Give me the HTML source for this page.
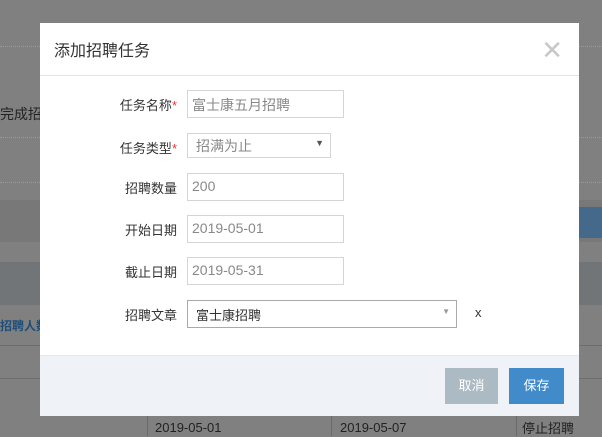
<!DOCTYPE html>
<html><head><meta charset="utf-8"><style>
*{margin:0;padding:0;box-sizing:border-box}
body{width:602px;height:433px;overflow:hidden;background:#808080;font-family:"Liberation Sans","Noto Sans CJK SC",sans-serif;position:relative}
.a{position:absolute}
.dl{position:absolute;left:0;width:602px;border-top:1px dotted #999}
.modal{position:absolute;left:40px;top:23px;width:539px;height:393px;background:#fff}
.hd{height:53px;border-bottom:1px solid #e5e5e5;font-size:16px;color:#333;padding:14px 0 0 14px}
.cl{position:absolute;right:16px;top:14px;font-size:26px;color:#c8c8c8;line-height:26px}
.lb{position:absolute;width:137px;text-align:right;font-size:13px;color:#333}
.lb i{color:#e33;font-style:normal}
.in{position:absolute;left:147px;width:157px;height:28px;border:1px solid #d5d5d5;font-size:14px;color:#888;padding:4px 0 0 4px}
.ft{position:absolute;left:0;top:332px;width:539px;height:61px;background:#eff3f8;border-top:1px solid #e4e9ee}
.bt{position:absolute;top:12px;height:36px;color:#fff;font-size:13px;text-align:center;line-height:36px}
</style></head><body>
<div class="dl" style="top:46px"></div>
<div class="dl" style="top:137px"></div>
<div class="dl" style="top:182px"></div>
<div class="a" style="left:0;top:200px;width:602px;height:42px;background:#787878"></div>
<div class="a" style="left:579px;top:207px;width:23px;height:31px;background:#45698a"></div>
<div class="a" style="left:0;top:262px;width:602px;height:43px;background:#727577"></div>
<div class="a" style="left:0;top:345px;width:602px;border-top:1px solid #6e6e6e"></div>
<div class="a" style="left:0;top:378px;width:602px;border-top:1px solid #6e6e6e"></div>
<div class="a" style="left:0;top:104px;font-size:14px;color:#222">完成招</div>
<div class="a" style="left:0;top:317px;font-size:12px;color:#1d4e7a;font-weight:bold">招聘人数</div>
<div class="a" style="left:147px;top:416px;height:20px;border-left:1px solid #6a6a6a"></div>
<div class="a" style="left:331px;top:416px;height:20px;border-left:1px solid #6a6a6a"></div>
<div class="a" style="left:516px;top:416px;height:20px;border-left:1px solid #6a6a6a"></div>
<div class="a" style="left:155px;top:420px;font-size:13px;color:#222">2019-05-01</div>
<div class="a" style="left:340px;top:420px;font-size:13px;color:#222">2019-05-07</div>
<div class="a" style="left:522px;top:418px;font-size:13px;color:#222">停止招聘</div>
<div class="modal">
<div class="hd">添加招聘任务</div>
<div class="cl">✕</div>
<div class="lb" style="top:72px">任务名称<i>*</i></div>
<div class="in" style="top:67px">富士康五月招聘</div>
<div class="lb" style="top:115px">任务类型<i>*</i></div>
<div class="in" style="top:110px;width:144px;height:25px;padding:2px 0 0 8px">招满为止<span style="position:absolute;right:6px;top:4px;font-size:9px;color:#555">▼</span></div>
<div class="lb" style="top:155px">招聘数量</div>
<div class="in" style="top:150px">200</div>
<div class="lb" style="top:197px">开始日期</div>
<div class="in" style="top:192px">2019-05-01</div>
<div class="lb" style="top:239px">截止日期</div>
<div class="in" style="top:234px">2019-05-31</div>
<div class="lb" style="top:282px">招聘文章</div>
<div class="in" style="top:277px;width:270px;height:28px;border-color:#aaa;color:#333;padding-left:8px;font-size:13px">富士康招聘<span style="position:absolute;right:6px;top:6px;font-size:8px;color:#999">▼</span></div>
<div class="a" style="left:435px;top:282px;font-size:13px;color:#333">x</div>
<div class="ft">
<div class="bt" style="left:405px;width:53px;background:#abbac3">取消</div>
<div class="bt" style="left:469px;width:55px;background:#428bca">保存</div>
</div>
</div>
</body></html>
